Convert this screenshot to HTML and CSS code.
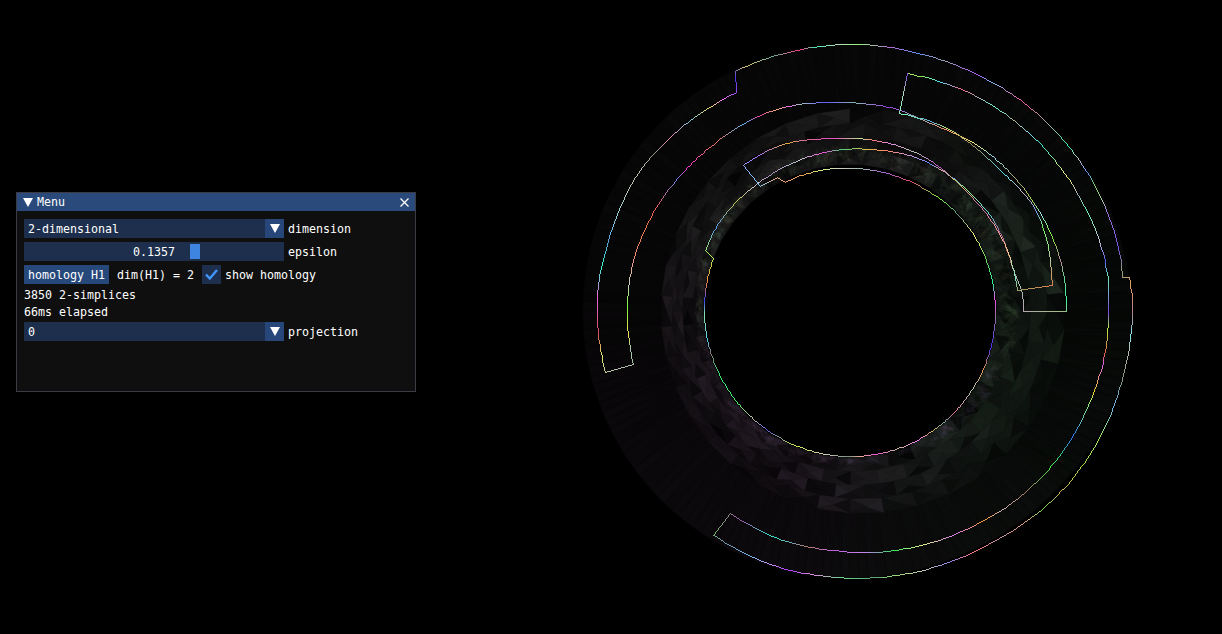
FILE: index.html
```html
<!DOCTYPE html>
<html lang="en">
<head>
<meta charset="utf-8">
<title>Menu</title>
<link rel="stylesheet" href="styles.css">
</head>
<body>
<canvas id="scene" class="scene" width="1222" height="634"></canvas>
<section class="window">
  <header class="titlebar">
    <svg class="tri-title" width="10" height="9" viewBox="0 0 10 9"><path d="M0 0H10L5 9Z" fill="#fff"/></svg>
    <span class="title">Menu</span>
    <svg class="close" width="9" height="9" viewBox="0 0 9 9"><path d="M.5 .5L8.5 8.5M8.5 .5L.5 8.5" stroke="#fff" stroke-width="1.2" fill="none"/></svg>
  </header>
  <div class="body">
    <div class="row">
      <div class="combo"><span class="combo-value">2-dimensional</span><span class="arrow"><svg width="10" height="9" viewBox="0 0 10 9"><path d="M0 0H10L5 9Z" fill="#fff"/></svg></span></div>
      <span class="text">dimension</span>
    </div>
    <div class="row">
      <div class="slider"><span class="text">0.1357</span><span class="grab"></span></div>
      <span class="text">epsilon</span>
    </div>
    <div class="row row-wide">
      <span class="button">homology H1</span>
      <span class="text">dim(H1) = 2</span>
      <span class="check-group">
        <span class="check"><svg width="13" height="11" viewBox="0 0 13 11"><path d="M1 5.5L4.8 9.5L12 1" stroke="#4296fa" stroke-width="2.4" fill="none"/></svg></span>
        <span class="text">show homology</span>
      </span>
    </div>
    <div class="text">3850 2-simplices</div>
    <div class="text">66ms elapsed</div>
    <div class="row">
      <div class="combo"><span class="combo-value">0</span><span class="arrow"><svg width="10" height="9" viewBox="0 0 10 9"><path d="M0 0H10L5 9Z" fill="#fff"/></svg></span></div>
      <span class="text">projection</span>
    </div>
  </div>
</section>
<script src="script.js"></script>
</body>
</html>
```
FILE: styles.css
```css
html, body {
  margin: 0;
  height: 100%;
  background: #000;
  overflow: hidden;
}
.scene {
  position: absolute;
  left: 0;
  top: 0;
  display: block;
}
.window {
  position: absolute;
  left: 16px;
  top: 192px;
  width: 400px;
  height: 200px;
  box-sizing: border-box;
  border: 1px solid #3b3b43;
  background: #0f0f0f;
  color: #fff;
  font: 11.63px/13px "DejaVu Sans Mono", "Liberation Mono", monospace;
  white-space: nowrap;
}
.titlebar {
  display: flex;
  align-items: center;
  height: 18px;
  padding: 0 6px;
  background: #294a7a;
}
.tri-title { margin-right: 4px; }
.title { flex: 1; }
.body {
  display: flex;
  flex-direction: column;
  gap: 4px;
  padding: 8px 7px;
}
.row {
  display: flex;
  align-items: center;
  gap: 4px;
}
.row-wide { gap: 8px; }
.text, .combo-value {
  height: 13px;
  line-height: 15px;
}
.combo, .slider {
  display: flex;
  width: 260px;
  height: 19px;
  background: #1d2f4c;
  align-items: center;
}
.combo-value { flex: 1; padding-left: 4px; }
.arrow {
  display: flex;
  align-items: center;
  justify-content: center;
  width: 19px;
  height: 19px;
  background: #27477a;
}
.slider { position: relative; justify-content: center; }
.grab {
  position: absolute;
  left: 166px;
  top: 2px;
  width: 10px;
  height: 15px;
  background: #3d85e0;
}
.button {
  height: 19px;
  padding: 0 4px;
  line-height: 21px;
  background: #26487a;
}
.check-group {
  display: flex;
  align-items: center;
  gap: 4px;
}
.check {
  display: flex;
  align-items: center;
  justify-content: center;
  width: 19px;
  height: 19px;
  background: #1d2f4c;
}
```
FILE: script.js
```js
(function () {
  var cv = document.getElementById('scene');
  var ctx = cv.getContext('2d');
  var CX = 850, CY = 311, seed = 12345;
  function rnd() {
    seed = (seed * 1664525 + 1013904223) >>> 0;
    return seed / 4294967296;
  }
  function pol(a, r) { return [CX + Math.cos(a) * r, CY + Math.sin(a) * r]; }
  function outerR(a) {
    var c = Math.max(0, Math.cos(a));
    return 267 + 14 * c * c * c;
  }
  function bandR(a) { return 202 + 13 * Math.cos(a); }
  function tri(p, q, s, col) {
    ctx.fillStyle = col;
    ctx.strokeStyle = col;
    ctx.lineWidth = 0.6;
    ctx.beginPath();
    ctx.moveTo(p[0], p[1]);
    ctx.lineTo(q[0], q[1]);
    ctx.lineTo(s[0], s[1]);
    ctx.closePath();
    ctx.fill();
    ctx.stroke();
  }
  // tint of the mesh by direction: purple at lower left, green at right
  function tint(a, base) {
    var green = Math.max(0, Math.cos(a - 0.3));
    var purple = Math.max(0, Math.cos(a - 2.2));
    var r = base * (1 + 0.14 * purple - 0.14 * green);
    var g = base * (1 + 0.2 * green - 0.12 * purple);
    var b = base * (1 + 0.16 * purple - 0.06 * green);
    return 'rgb(' + (r | 0) + ',' + (g | 0) + ',' + (b | 0) + ')';
  }
  ctx.fillStyle = '#000';
  ctx.fillRect(0, 0, 1222, 634);
  var i, j, a0, a1, n;

  // faint outer band
  n = 180;
  for (i = 0; i < n; i++) {
    a0 = i / n * 2 * Math.PI; a1 = (i + 1) / n * 2 * Math.PI;
    var m0 = bandR(a0) - 2, m1 = bandR(a1) - 2, o0 = outerR(a0), o1 = outerR(a1);
    var k = 6 + 1.6 * rnd() + 4 * Math.max(0, Math.sin(a0));
    tri(pol(a0, m0), pol(a1, m1), pol(a0, o0), tint(a0, k));
    tri(pol(a1, m1), pol(a1, o1), pol(a0, o0), tint(a0, k + 1.2 * rnd()));
  }

  // checkered middle band: rings of diamond cells
  n = 38;
  var rings = 4;
  for (j = 0; j < rings; j++) {
    for (i = 0; i < n; i++) {
      a0 = (i + j * 0.5) / n * 2 * Math.PI; a1 = (i + 1 + j * 0.5) / n * 2 * Math.PI;
      var am = (a0 + a1) / 2;
      var f0 = j / rings, f1 = (j + 1) / rings;
      var rad = function (a, f) { return 147 + (bandR(a) - 147) * f; };
      var C = pol(am, rad(am, (f0 + f1) / 2));
      var base = 12 + 17 * rnd();
      var A = pol(a0, rad(a0, f0)), B = pol(a1, rad(a1, f0));
      var D = pol(a1, rad(a1, f1)), E = pol(a0, rad(a0, f1));
      tri(A, B, C, tint(am, base));
      tri(B, D, C, tint(am, base * (rnd() * 0.5 + 0.7)));
      tri(D, E, C, tint(am, base * (0.45 + 0.7 * rnd())));
      tri(E, A, C, tint(am, base * (0.45 + 0.7 * rnd())));
    }
  }

  // noisy translucent band close to the hole
  ctx.globalCompositeOperation = 'lighter';
  for (i = 0; i < 520; i++) {
    var a = rnd() * 2 * Math.PI;
    var right = Math.max(0, Math.cos(a + 0.4));
    var top = Math.max(0, -Math.sin(a));
    var width = 9 + 18 * Math.max(right, top * 0.7);
    var r = 146 + rnd() * width;
    var h = Math.sin(a) > 0.25 ? 260 + rnd() * 50 : 50 + rnd() * 110;
    var sp = 0.05;
    ctx.fillStyle = 'hsla(' + (h | 0) + ',25%,40%,0.05)';
    ctx.beginPath();
    var p1 = pol(a, r), p2 = pol(a + sp * rnd(), 146 + rnd() * width), p3 = pol(a - sp * rnd(), 146 + rnd() * width);
    ctx.moveTo(p1[0], p1[1]);
    ctx.lineTo(p2[0], p2[1]);
    ctx.lineTo(p3[0], p3[1]);
    ctx.closePath();
    ctx.fill();
  }
  ctx.globalCompositeOperation = 'source-over';

  // the hole stays black
  ctx.fillStyle = '#000';
  ctx.beginPath();
  ctx.arc(CX, CY, 144.5, 0, 2 * Math.PI);
  ctx.fill();

  // rainbow boundary curve, drawn without antialiasing
  function arc(points) {
    var out = [], pol2 = [], prev = null;
    points.forEach(function (p) {
      var t = Math.atan2(p[1] - CY, p[0] - CX);
      if (prev !== null) {
        while (t - prev > Math.PI) t -= 2 * Math.PI;
        while (t - prev < -Math.PI) t += 2 * Math.PI;
      }
      prev = t;
      pol2.push([t, Math.hypot(p[0] - CX, p[1] - CY)]);
    });
    for (var s = 0; s < pol2.length - 1; s++) {
      var P1 = pol2[s], P2 = pol2[s + 1];
      var P0 = pol2[Math.max(0, s - 1)], P3 = pol2[Math.min(pol2.length - 1, s + 2)];
      var steps = Math.max(2, Math.ceil(Math.abs(P2[0] - P1[0]) * 60));
      for (var q = 0; q < steps; q++) {
        var u = q / steps;
        var ang = P1[0] + (P2[0] - P1[0]) * u;
        var m1 = (P2[1] - P0[1]) / 2, m2 = (P3[1] - P1[1]) / 2;
        var u2 = u * u, u3 = u2 * u;
        var rr = (2 * u3 - 3 * u2 + 1) * P1[1] + (u3 - 2 * u2 + u) * m1 + (-2 * u3 + 3 * u2) * P2[1] + (u3 - u2) * m2;
        out.push(pol(ang, rr));
      }
    }
    out.push(points[points.length - 1]);
    return out;
  }
  function pick() {
    var h = rnd() * 360, s = 55 + rnd() * 40, l = 55 + rnd() * 20;
    if (rnd() < 0.3) { s = 8 + rnd() * 25; l = 50 + rnd() * 30; }
    s /= 100; l /= 100;
    function f(m) {
      var k = (m + h / 30) % 12;
      return 255 * (l - s * Math.min(l, 1 - l) * Math.max(-1, Math.min(k - 3, 9 - k, 1)));
    }
    return [f(0), f(8), f(4)];
  }
  var colA = pick(), colB = pick(), left = 18, span = 18;
  function nextColor() {
    if (left <= 0) {
      colA = colB; colB = pick();
      span = left = 14 + rnd() * 30;
    }
    var u = 1 - left / span;
    left -= 1;
    return 'rgb(' + [0, 1, 2].map(function (c) { return (colA[c] + (colB[c] - colA[c]) * u) | 0; }).join(',') + ')';
  }
  function line(a, b) {
    var x0 = Math.round(a[0]), y0 = Math.round(a[1]), x1 = Math.round(b[0]), y1 = Math.round(b[1]);
    var dx = Math.abs(x1 - x0), dy = Math.abs(y1 - y0), sx = x0 < x1 ? 1 : -1, sy = y0 < y1 ? 1 : -1, e = dx - dy;
    for (;;) {
      ctx.fillStyle = nextColor();
      ctx.fillRect(x0, y0, 1, 1);
      if (x0 === x1 && y0 === y1) break;
      var e2 = 2 * e;
      if (e2 > -dy) { e -= dy; x0 += sx; }
      if (e2 < dx) { e += dx; y0 += sy; }
    }
  }
  function poly(pts) {
    for (var t = 0; t < pts.length - 1; t++) line(pts[t], pts[t + 1]);
  }
  var P = [[907,73],[970,93],[1060,167],[1107,273],[1108,300],[1105,350],[1090,400],[1063,450],[1018,498],[980,522],[913,547],[873,552],[833,550],[783,540],[730,513]];
  var Q = [[713,535],[773,565],[837,577],[880,577],[980,548],[1020,525],[1055,497],[1097,442],[1123,375],[1132,300],[1129,277]];
  var Q2 = [[1122,277],[1120,257],[1093,183],[1023,102],[943,60],[850,44],[735,71]];
  var Q3 = [[736,92],[700,113],[640,170],[608,240],[598,283],[597,317],[605,372]];
  var R = [[633,364],[628,290],[640,240],[700,155],[737,127],[780,108],[837,102],[900,110],[930,123],[980,147],[1027,193],[1060,260],[1066,311]];
  var T = [[1023,311],[1021,290],[1012,267],[993,220],[970,193],[923,160],[873,149],[843,149],[813,155],[783,167],[755,185],[720,220],[705,250]];
  var H = [[713,258],[704,312],[727,388],[850,456],[995,311],[960,217],[900,177],[857,168],[833,168],[785,182]];
  var U = [[743,165],[780,145],[833,138],[853,138],[917,153],[965,190],[1000,235],[1017,290]];
  var V = [[1052,285],[1037,213],[997,167],[947,128],[899,113]];
  poly(arc(P));
  line([730,513],[713,535]);
  poly(arc(Q));
  line([1129,277],[1122,277]);
  poly(arc(Q2));
  line([735,71],[736,92]);
  poly(arc(Q3));
  line([605,372],[633,364]);
  poly(arc(R));
  line([1066,311],[1023,311]);
  poly(arc(T));
  line([705,250],[713,258]);
  poly(arc(H));
  poly([[785,182],[777,177],[760,186],[743,165]]);
  poly(arc(U));
  line([1017,290],[1052,285]);
  poly(arc(V));
  line([899,113],[907,73]);
})();
```
